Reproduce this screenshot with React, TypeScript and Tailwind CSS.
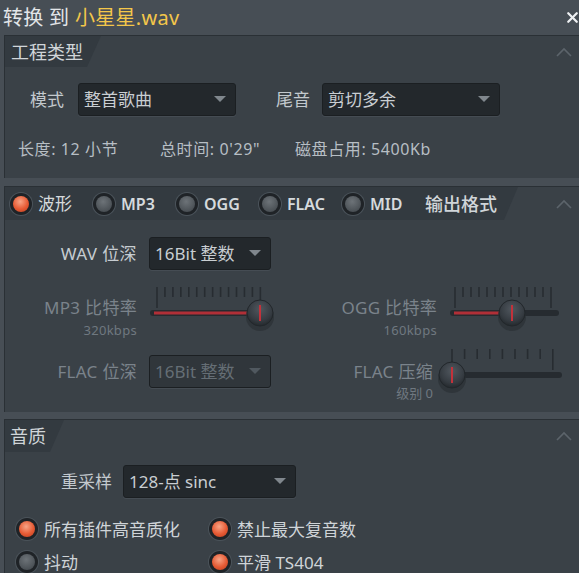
import { X } from 'lucide-react';

// small up chevron at the right of each section header
function Chevron() {
  return (
    <svg width="18" height="12" viewBox="0 0 18 12" className="mr-[6px]">
      <polyline points="2,10 9,3 16,10" fill="none" stroke="#5c646b" strokeWidth="1.6" />
    </svg>
  );
}

function Radio({ on }: { on?: boolean }) {
  return (
    <span className="w-[22px] h-[22px] shrink-0 rounded-full bg-[#1f2327] shadow-[0_0_0_1px_#4b535a] flex items-center justify-center">
      <span
        className={
          on
            ? 'w-[16px] h-[16px] rounded-full bg-[radial-gradient(circle_at_45%_35%,#f7a486,#e65a34_55%,#b83c1e)]'
            : 'w-[16px] h-[16px] rounded-full bg-[radial-gradient(circle_at_45%_35%,#6d7378,#4b5156_70%,#3c4146)]'
        }
      />
    </span>
  );
}

function Dropdown({ text, className, dim }: { text: string; className: string; dim?: boolean }) {
  return (
    <div
      className={`h-[33px] rounded-[3px] border border-[#1b1f22] flex items-center justify-between pl-[5px] pr-[9px] shadow-[0_1px_0_#454c53] ${
        dim ? 'bg-[#30363b] text-[#656e75]' : 'bg-[#23282c] text-[#c9ced2]'
      } ${className}`}
    >
      <span className="text-[17px] leading-none">{text}</span>
      <svg width="12" height="7" viewBox="0 0 12 7">
        <polygon points="0,0 12,0 6,6" fill={dim ? '#50585f' : '#80878d'} />
      </svg>
    </div>
  );
}

interface SliderProps {
  width: number;
  ticks: number[];
  tall: number[];
  track: [number, number];
  knob: number;
  fill?: [number, number];
}

function Slider({ width, ticks, tall, track, knob, fill }: SliderProps) {
  return (
    <svg width={width} height="60" viewBox={`0 0 ${width} 60`} className="shrink-0">
      <defs>
        <radialGradient id="kn" cx="50%" cy="35%" r="65%">
          <stop offset="0%" stopColor="#50575e" />
          <stop offset="70%" stopColor="#353b41" />
          <stop offset="100%" stopColor="#24292d" />
        </radialGradient>
      </defs>
      {ticks.map((x, i) => (
        <line
          key={i}
          x1={x}
          x2={x}
          y1={4}
          y2={tall.includes(i) ? 25 : 14}
          stroke="#272c31"
          strokeWidth="1.6"
        />
      ))}
      <line x1={track[0]} x2={track[1]} y1={30} y2={30} stroke="#262b30" strokeWidth="6" strokeLinecap="round" />
      {fill && (
        <line x1={fill[0]} x2={fill[1]} y1={30} y2={30} stroke="#b12f37" strokeWidth="3" />
      )}
      <ellipse cx={knob} cy={34} rx={14} ry={14} fill="#2b3035" opacity="0.7" />
      <circle cx={knob} cy={30} r={13} fill="url(#kn)" stroke="#22272b" strokeWidth="1" />
      <line x1={knob} x2={knob} y1={22} y2={38} stroke="#c2323b" strokeWidth="2" />
    </svg>
  );
}

function SectionTab({ children, className }: { children: React.ReactNode; className: string }) {
  return (
    <div
      className={`h-full flex items-center bg-[#333a40] [clip-path:polygon(0_0,100%_0,calc(100%-14px)_100%,0_100%)] ${className}`}
    >
      {children}
    </div>
  );
}

const range = (from: number, step: number, n: number) => Array.from({ length: n }, (_, i) => from + i * step);

export default function App() {
  const formats = [
    { label: '波形', on: true, bold: false },
    { label: 'MP3', on: false, bold: true },
    { label: 'OGG', on: false, bold: true },
    { label: 'FLAC', on: false, bold: true },
    { label: 'MID', on: false, bold: true },
  ];

  return (
    <div className="w-[579px] h-[573px] overflow-hidden bg-[#474e55] font-['Noto_Sans','Noto_Sans_CJK_SC',sans-serif] text-[#c3c9ce] select-none">
      {/* Title bar */}
      <div className="h-[35px] flex items-center justify-between pl-[3px]">
        <div className="text-[20px] leading-none tracking-[0.3px]">
          <span className="text-[#e2e5e8]">转换 到 </span>
          <span className="text-[#f3c64a]">小星星.wav</span>
        </div>
        <X className="w-[17px] h-[17px] text-[#eef0f2] -mr-[2px]" strokeWidth={3.2} />
      </div>

      {/* 工程类型 */}
      <div className="ml-[4px] h-[143px] border-l border-t border-[#2a3035] bg-[#3a4147]">
        <div className="h-[31px] flex items-center justify-between">
          <SectionTab className="w-[96px] pl-[6px]">
            <span className="text-[18px] leading-none text-[#d0d5d9]">工程类型</span>
          </SectionTab>
          <Chevron />
        </div>
        <div className="mt-[16px] flex items-center pl-[25px]">
          <span className="text-[17px] w-[48px]">模式</span>
          <Dropdown text="整首歌曲" className="w-[158px]" />
          <span className="text-[17px] ml-[40px] w-[46px]">尾音</span>
          <Dropdown text="剪切多余" className="w-[178px]" />
        </div>
        <div className="mt-[23px] flex items-center pl-[13px] text-[16px] leading-[20px] tracking-[0.6px] text-[#b7bec4]">
          <span className="w-[142px]">长度: 12 小节</span>
          <span className="w-[135px]">总时间: 0'29"</span>
          <span>磁盘占用: 5400Kb</span>
        </div>
      </div>

      {/* 输出格式 */}
      <div className="mt-[8px] ml-[4px] h-[226px] border-l border-t border-[#2a3035] bg-[#3a4147]">
        <div className="h-[33px] flex items-center justify-between">
          <SectionTab className="w-[513px] pl-[5px]">
            {formats.map((f) => (
              <div key={f.label} className="w-[83px] flex items-center gap-[6px]">
                <Radio on={f.on} />
                <span className={`leading-none text-[#d6dadd] ${f.bold ? 'text-[16px] font-semibold' : 'text-[17px]'}`}>{f.label}</span>
              </div>
            ))}
            <span className="text-[18px] leading-none text-[#d0d5d9] font-medium">输出格式</span>
          </SectionTab>
          <Chevron />
        </div>

        <div className="mt-[17px] flex items-center">
          <span className="w-[132px] text-right text-[17px] tracking-[0.4px] text-[#c6ccd1]">WAV 位深</span>
          <Dropdown text="16Bit 整数" className="ml-[12px] w-[122px]" />
        </div>

        <div className="mt-[13px] h-[60px] flex items-start text-[#7a838b]">
          <div className="w-[132px] mt-[15px] flex flex-col items-end">
            <span className="text-[17px] leading-[20px] tracking-[0.3px]">MP3 比特率</span>
            <span className="text-[13px] leading-[16px] mt-[4px] tracking-[0.3px] text-[#6f7880]">320kbps</span>
          </div>
          <div className="ml-[12px]">
            <Slider width={135} ticks={range(8, 7.95, 14)} tall={[0, 13]} track={[4, 114]} knob={111} fill={[5, 108]} />
          </div>
          <div className="w-[153px] mt-[15px] flex flex-col items-end">
            <span className="text-[17px] leading-[20px] tracking-[0.3px]">OGG 比特率</span>
            <span className="text-[13px] leading-[16px] mt-[4px] tracking-[0.3px] text-[#6f7880]">160kbps</span>
          </div>
          <div className="ml-[8px]">
            <Slider width={130} ticks={range(10, 8, 13)} tall={[0, 12]} track={[8, 111]} knob={67} fill={[9, 62]} />
          </div>
        </div>

        <div className="mt-[2px] h-[60px] flex items-start text-[#7a838b]">
          <span className="w-[132px] mt-[17px] text-right text-[17px] leading-[20px] tracking-[0.3px]">FLAC 位深</span>
          <Dropdown text="16Bit 整数" className="ml-[12px] mt-[10px] w-[122px]" dim />
          <div className="w-[162px] mt-[17px] flex flex-col items-end">
            <span className="text-[17px] leading-[20px] tracking-[0.3px]">FLAC 压缩</span>
            <span className="text-[13px] leading-[16px] mt-[3px] text-[#6f7880]">级别 0</span>
          </div>
          <div className="ml-[2px]">
            <Slider width={140} ticks={range(17, 12.6, 9)} tall={[0, 8]} track={[17, 124]} knob={17} />
          </div>
        </div>
      </div>

      {/* 音质 */}
      <div className="mt-[7px] ml-[4px] h-[160px] border-l border-t border-[#2a3035] bg-[#3a4147]">
        <div className="h-[32px] flex items-center justify-between">
          <SectionTab className="w-[59px] pl-[5px]">
            <span className="text-[18px] leading-none text-[#d0d5d9]">音质</span>
          </SectionTab>
          <Chevron />
        </div>
        <div className="mt-[13px] flex items-center">
          <span className="w-[107px] text-right text-[17px]">重采样</span>
          <Dropdown text="128-点 sinc" className="ml-[11px] w-[173px]" />
        </div>
        <div className="mt-[20px] pl-[11px] grid grid-cols-[193px_1fr] gap-y-[11px] text-[17px] leading-none text-[#cfd4d8]">
          <div className="flex items-center gap-[6px]">
            <Radio on />
            <span>所有插件高音质化</span>
          </div>
          <div className="flex items-center gap-[6px]">
            <Radio on />
            <span>禁止最大复音数</span>
          </div>
          <div className="flex items-center gap-[6px]">
            <Radio />
            <span>抖动</span>
          </div>
          <div className="flex items-center gap-[6px]">
            <Radio on />
            <span>平滑 TS404</span>
          </div>
        </div>
      </div>
    </div>
  );
}
